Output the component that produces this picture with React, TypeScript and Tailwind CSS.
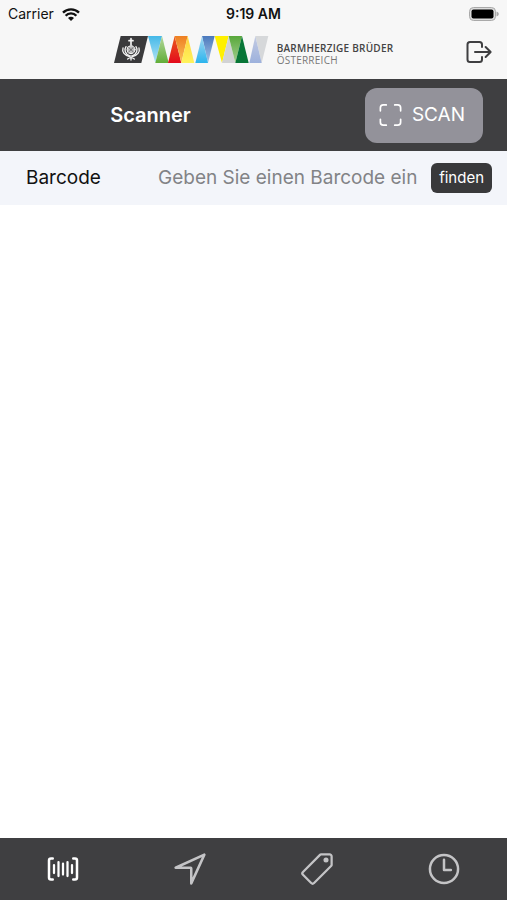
import React, { useState } from 'react';

interface IconProps {
  className?: string;
}

const outline = {
  viewBox: '0 0 512 512',
  fill: 'none',
  stroke: 'currentColor',
  strokeWidth: 32,
  strokeLinecap: 'round' as const,
  strokeLinejoin: 'round' as const,
  'aria-hidden': true,
};

const LogOutIcon: React.FC<IconProps> = ({ className }) => (
  <svg {...outline} className={className}>
    <path d="M304 336v40a40 40 0 01-40 40H112a40 40 0 01-40-40V136a40 40 0 0140-40h152c22 0 40 18 40 40v40M362 336l80-80-80-80M192 256h246" />
  </svg>
);

const ScanIcon: React.FC<IconProps> = ({ className }) => (
  <svg {...outline} className={className}>
    <path d="M336 448h56a56 56 0 0056-56v-56M448 176v-56a56 56 0 00-56-56h-56M176 448h-56a56 56 0 01-56-56v-56M64 176v-56a56 56 0 0156-56h56" />
  </svg>
);

const BarcodeIcon: React.FC<IconProps> = ({ className }) => (
  <svg {...outline} className={className}>
    <path d="M92 88H64a32 32 0 00-32 32v272a32 32 0 0032 32h28M420 88h28a32 32 0 0132 32v272a32 32 0 01-32 32h-28" strokeWidth="40" />
    <path d="M112 192v128M184 144v224M256 168v176M328 144v224M400 192v128" strokeWidth="36" />
  </svg>
);

const NavigateIcon: React.FC<IconProps> = ({ className }) => (
  <svg {...outline} className={className}>
    <path d="M440 72L72 240.14h192a8 8 0 018 8V440z" />
  </svg>
);

const TagIcon: React.FC<IconProps> = ({ className }) => (
  <svg {...outline} className={className}>
    <path d="M435.25 48h-122.9a14.46 14.46 0 00-10.2 4.2L56.45 297.9a28.85 28.85 0 000 40.7l117 117a28.85 28.85 0 0040.7 0L459.75 210a14.46 14.46 0 004.2-10.2v-123a28.66 28.66 0 00-28.7-28.8z" />
    <circle cx="384" cy="128" r="36" fill="currentColor" stroke="none" />
  </svg>
);

const TimeIcon: React.FC<IconProps> = ({ className }) => (
  <svg {...outline} className={className}>
    <circle cx="256" cy="256" r="180" />
    <path d="M256 136v132h88" />
  </svg>
);

const WifiIcon: React.FC<IconProps> = ({ className }) => (
  <svg viewBox="0 0 54 39" fill="none" stroke="currentColor" strokeWidth="7" className={className} aria-hidden>
    <path d="M3 14C16 1 38 1 51 14M11 23c8-9 24-9 32 0" />
    <path d="M27 39l-9-9c5-5 13-5 18 0z" fill="currentColor" stroke="none" />
  </svg>
);

const BatteryIcon: React.FC<IconProps> = ({ className }) => (
  <svg viewBox="0 0 30 14" className={className} aria-hidden>
    <rect x="0.5" y="0.5" width="26" height="13" rx="4" fill="#dcdcdc" stroke="#a9a9a9" />
    <rect x="2.5" y="2.5" width="22" height="9" rx="2" fill="#000" />
    <path d="M27.5 4.5c3 1 3 4 0 5z" fill="#a9a9a9" />
  </svg>
);

const gradients = [
  { id: 'cyan', from: '#45b9e8', to: '#b5e4f5' },
  { id: 'green', from: '#b3d79c', to: '#62ae38' },
  { id: 'red', from: '#ea5b1c', to: '#e30b1c' },
  { id: 'orange', from: '#ee7f22', to: '#fbc25a' },
  { id: 'yellow', from: '#ffd33d', to: '#fff35c' },
  { id: 'blue', from: '#4b79bd', to: '#a9c5e6' },
  { id: 'sky', from: '#a6d8f2', to: '#2bb4ed' },
  { id: 'leaf', from: '#58a83b', to: '#a5cf91' },
  { id: 'lilac', from: '#c3cbe3', to: '#9db1dc' },
];

const Logo: React.FC<IconProps> = ({ className }) => (
  <svg viewBox="0 0 465 81" className={className} aria-hidden>
    <defs>
      {gradients.map(g => (
        <linearGradient key={g.id} id={g.id} x1="0" y1="0" x2="0" y2="1">
          <stop offset="0" stopColor={g.from} />
          <stop offset="1" stopColor={g.to} />
        </linearGradient>
      ))}
    </defs>
    {/* Crest */}
    <path d="M20 0h82L82 81H0z" fill="#3a3a3c" />
    <g fill="none" stroke="#f4f4f4" strokeWidth="4" strokeLinecap="round">
      <path d="M51 8v18M45 14h12" strokeWidth="5" />
      <circle cx="51" cy="41" r="12" fill="#bdbdbe" strokeWidth="3" />
      <path d="M44 34l14 14M58 34L44 48" stroke="#3a3a3c" strokeWidth="2" />
      <path d="M36 32c-7 10-2 22 10 27M66 32c7 10 2 22-10 27" />
      <path d="M27 36c-4 12 5 23 20 26M75 36c4 12-5 23-20 26" />
      <path d="M41 69c6-5 14-5 20 0M51 58v14" />
    </g>
    {/* Ribbon */}
    <path d="M102 0h42l-20 81z" fill="url(#cyan)" />
    <path d="M144 0l20 81h-40z" fill="url(#green)" />
    <path d="M182 0l20 81h-40z" fill="url(#red)" />
    <path d="M182 0h39l-19 81z" fill="url(#orange)" />
    <path d="M221 0l20 81h-39z" fill="url(#yellow)" />
    <path d="M264 0h38l-20 81z" fill="url(#blue)" />
    <path d="M264 0l18 81h-38z" fill="url(#sky)" />
    <path d="M302 0h42l-20 81z" fill="#fff000" />
    <path d="M344 0l20 81h-40z" fill="#d2d3d5" />
    <path d="M344 0h40l-20 81z" fill="url(#leaf)" />
    <path d="M384 0l20 81h-40z" fill="#087637" />
    <path d="M424 0h39l-20 81z" fill="#d6d8da" />
    <path d="M424 0l19 81h-37z" fill="url(#lilac)" />
  </svg>
);

const tabs = [
  { id: 'scanner', label: 'Scanner', Icon: BarcodeIcon, size: 'w-8 h-8' },
  { id: 'navigate', label: 'Navigation', Icon: NavigateIcon, size: 'w-10 h-10' },
  { id: 'tags', label: 'Etiketten', Icon: TagIcon, size: 'w-9 h-9' },
  { id: 'history', label: 'Verlauf', Icon: TimeIcon, size: 'w-10 h-10' },
];

export default function App() {
  const [barcode, setBarcode] = useState('');
  const [active, setActive] = useState('scanner');

  return (
    <div className="min-h-screen flex flex-col bg-white font-[Inter,'Liberation_Sans',sans-serif]">
      <header className="bg-[#f7f7f7]">
        {/* Status bar */}
        <div className="grid grid-cols-3 items-center h-7 px-2 text-sm text-[#111]">
          <div className="flex items-center gap-2">
            <span>Carrier</span>
            <WifiIcon className="w-[18px] h-[13px]" />
          </div>
          <span className="text-center font-semibold">9:19 AM</span>
          <BatteryIcon className="w-[30px] h-[14px] justify-self-end" />
        </div>

        <div className="grid grid-cols-[1fr_auto_1fr] items-center h-[51px] pb-1 px-3">
          <div />
          <div className="flex items-center gap-2">
            <Logo className="w-[155px] h-[27px] mb-1" />
            <div className="mt-1 font-['Open_Sans',sans-serif] text-[10px] leading-[12px] tracking-wide text-[#444]">
              <div className="font-semibold">BARMHERZIGE BRÜDER</div>
              <div className="text-[#777]">ÖSTERREICH</div>
            </div>
          </div>
          <button aria-label="Abmelden" className="justify-self-end text-[#3f3f41]">
            <LogOutIcon className="w-8 h-8" />
          </button>
        </div>
      </header>

      <div className="flex items-center h-[72px] bg-[#3f3f41] text-white pr-6">
        <h1 className="flex-1 text-center text-xl font-semibold pr-16">Scanner</h1>
        <button className="flex items-center gap-2 h-[55px] pl-3 pr-[18px] rounded-xl bg-[#93929a] text-[19px]">
          <ScanIcon className="w-[27px] h-[30px]" />
          SCAN
        </button>
      </div>

      <form
        onSubmit={e => e.preventDefault()}
        className="flex items-center h-[54px] pl-[26px] pr-[15px] bg-[#f3f5fa]"
      >
        <label htmlFor="barcode" className="w-[132px] shrink-0 text-[19px] text-[#111]">Barcode</label>
        <input
          id="barcode"
          value={barcode}
          onChange={e => setBarcode(e.target.value)}
          placeholder="Geben Sie einen Barcode ein"
          className="flex-1 min-w-0 bg-transparent text-[19px] text-[#111] placeholder:text-[#828386] outline-none"
        />
        <button className="ml-[14px] h-[30px] px-2 rounded-md bg-[#39393b] text-white text-[15px]">finden</button>
      </form>

      <main className="flex-1" />

      <nav className="grid grid-cols-4 h-[62px] bg-[#3f3f41]">
        {tabs.map(({ id, label, Icon, size }) => (
          <button
            key={id}
            aria-label={label}
            onClick={() => setActive(id)}
            className={`flex items-center justify-center ${active === id ? 'text-white' : 'text-[#c4c4c6]'}`}
          >
            <Icon className={size} />
          </button>
        ))}
      </nav>
    </div>
  );
}
